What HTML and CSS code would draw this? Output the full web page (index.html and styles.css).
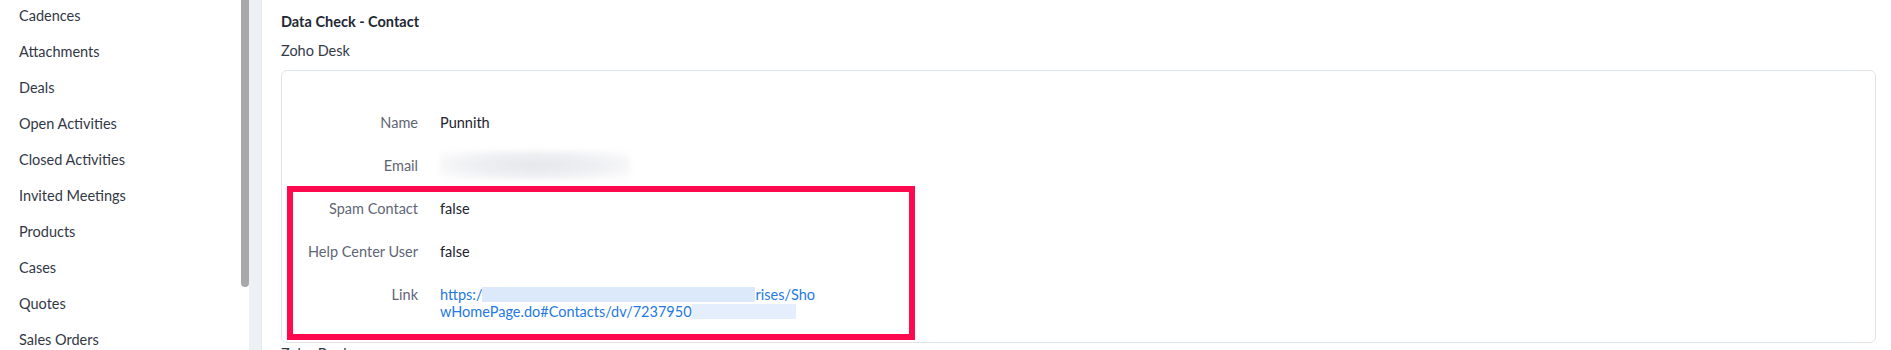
FILE: index.html
```html
<!DOCTYPE html>
<html lang="en">
<head>
  <meta charset="UTF-8" />
  <meta name="viewport" content="width=device-width, initial-scale=1.0" />
  <title>Data Check - Contact</title>
  <link rel="stylesheet" href="styles.css">
</head>
<body>
  <nav class="sidebar">
    <ul class="nav-list">
      <li>Cadences</li>
      <li>Attachments</li>
      <li>Deals</li>
      <li>Open Activities</li>
      <li>Closed Activities</li>
      <li>Invited Meetings</li>
      <li>Products</li>
      <li>Cases</li>
      <li>Quotes</li>
      <li>Sales Orders</li>
    </ul>
  </nav>
  <div class="scrollbar"><div class="thumb"></div></div>
  <div class="strip"></div>

  <main class="main">
    <h2 class="section-title">Data Check - Contact</h2>
    <div class="source">Zoho Desk</div>

    <div class="card">
      <div class="fields">
        <div class="row">
          <div class="label">Name</div>
          <div class="value">Punnith</div>
        </div>
        <div class="row">
          <div class="label">Email</div>
          <div class="value"><span class="blur-email"></span></div>
        </div>
        <div class="highlight">
          <div class="row">
            <div class="label">Spam Contact</div>
            <div class="value">false</div>
          </div>
          <div class="row">
            <div class="label">Help Center User</div>
            <div class="value">false</div>
          </div>
          <div class="row">
            <div class="label">Link</div>
            <div class="value">
              <a class="link" href="#">
                <span class="line">https:/<span class="blur-link first"></span>rises/Sho</span>
                <span class="line">wHomePage.do#Contacts/dv/7237950<span class="blur-link second"></span></span>
              </a>
            </div>
          </div>
        </div>
      </div>
    </div>

    <div class="source next">Zoho Books</div>
  </main>
</body>
</html>
```
FILE: styles.css
```css
:root {
  --text-color: #2c323e;
  --label-color: #5f6674;
  --border-color: #dfe4ec;
  --link-color: #2479e2;
  --mark-color: #ff0a4f;
  --font-family: 'Lato', 'Liberation Sans', sans-serif;
}

body {
  margin: 0;
  padding: 0;
  font-family: var(--font-family);
  font-size: 14.5px;
  color: var(--text-color);
  background-color: #fff;
  display: flex;
  height: 350px;
  overflow: hidden;
}

.sidebar {
  width: 241px;
  flex-shrink: 0;
  background-color: #fff;
}

.nav-list {
  list-style: none;
  margin: -2px 0 0 0;
  padding: 0 0 0 19px;
}

.nav-list li {
  line-height: 36px;
  color: #323846;
}

.scrollbar {
  width: 8px;
  flex-shrink: 0;
}

.thumb {
  width: 8px;
  height: 287px;
  background-color: #a8a8a8;
  border-radius: 0 0 4px 4px;
}

.strip {
  width: 12px;
  flex-shrink: 0;
  background-color: #edf0f5;
  border-right: 1px solid #e3e7ee;
}

.main {
  flex: 1;
  padding: 0 15px 0 19px;
}

.section-title {
  margin: 12px 0 0 0;
  font-size: 14.5px;
  font-weight: bold;
  line-height: 20px;
  color: #222834;
}

.source {
  margin-top: 9px;
  line-height: 20px;
  color: #343a46;
}

.source.next {
  margin-top: 2px;
  line-height: 17px;
}

.card {
  margin-top: 9px;
  height: 273px;
  box-sizing: border-box;
  border: 1px solid var(--border-color);
  border-radius: 6px;
  padding-top: 43px;
}

.fields, .highlight {
  display: flex;
  flex-direction: column;
  gap: 26px;
}

.highlight {
  position: relative;
}

.highlight::after {
  content: "";
  position: absolute;
  left: 5px;
  top: -14px;
  width: 628px;
  height: 154px;
  box-sizing: border-box;
  border: 6px solid var(--mark-color);
}

.row {
  display: flex;
  gap: 22px;
  line-height: 17px;
  height: 17px;
}

.highlight .row:last-child {
  height: 34px;
}

.label {
  width: 136px;
  flex-shrink: 0;
  text-align: right;
  color: var(--label-color);
}

.value {
  color: #1d2330;
}

.blur-email {
  display: block;
  width: 190px;
  height: 30px;
  margin-top: -7px;
  background: radial-gradient(ellipse at center, #e6e7eb 0%, #eeeff2 45%, #fafafb 80%, #fff 100%);
  filter: blur(2px);
}

.link {
  color: var(--link-color);
  text-decoration: none;
}

.line {
  display: block;
  white-space: nowrap;
}

.blur-link {
  display: inline-block;
  height: 15px;
  vertical-align: -2px;
  background-color: #dce9fb;
  filter: blur(0.6px);
}

.blur-link.first {
  width: 273px;
}

.blur-link.second {
  width: 104px;
  background-color: #e4eefc;
}
```
